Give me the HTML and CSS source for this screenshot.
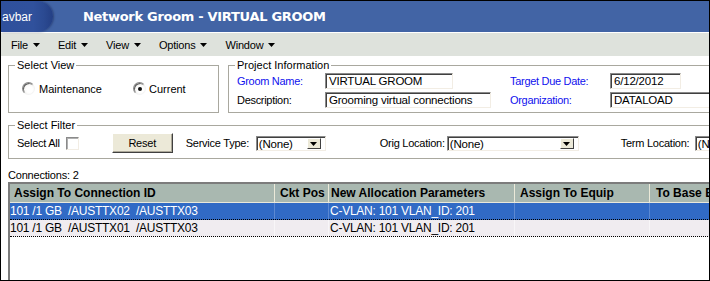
FILE: index.html
```html
<!DOCTYPE html>
<html>
<head>
<meta charset="utf-8">
<title>Network Groom</title>
<link rel="stylesheet" href="styles.css">
</head>
<body>
<div class="window">
  <div class="titlebar">
    <div class="navpill">avbar</div>
    <div class="title">Network Groom - VIRTUAL GROOM</div>
  </div>
  <div class="menubar">
    <div class="menu-item">File<svg class="caret" width="7" height="4" viewBox="0 0 7 4"><polygon points="0,0 7,0 3.5,4" fill="#000"/></svg></div>
    <div class="menu-item">Edit<svg class="caret" width="7" height="4" viewBox="0 0 7 4"><polygon points="0,0 7,0 3.5,4" fill="#000"/></svg></div>
    <div class="menu-item">View<svg class="caret" width="7" height="4" viewBox="0 0 7 4"><polygon points="0,0 7,0 3.5,4" fill="#000"/></svg></div>
    <div class="menu-item">Options<svg class="caret" width="7" height="4" viewBox="0 0 7 4"><polygon points="0,0 7,0 3.5,4" fill="#000"/></svg></div>
    <div class="menu-item">Window<svg class="caret" width="7" height="4" viewBox="0 0 7 4"><polygon points="0,0 7,0 3.5,4" fill="#000"/></svg></div>
  </div>
  <div class="content">
    <div class="top-row">
      <fieldset class="box view-box">
        <legend>Select View</legend>
        <div class="radio-row">
          <span class="radio"></span><span class="radio-label">Maintenance</span>
          <span class="radio checked second"></span><span class="radio-label narrow">Current</span>
        </div>
      </fieldset>
      <fieldset class="box project-box">
        <legend>Project Information</legend>
        <div class="project-grid">
          <span class="lbl blue">Groom Name:</span>
          <div class="input w-name">VIRTUAL GROOM</div>
          <span class="lbl blue">Target Due Date:</span>
          <div class="input w-date">6/12/2012</div>
          <span class="lbl">Description:</span>
          <div class="input w-desc">Grooming virtual connections</div>
          <span class="lbl blue">Organization:</span>
          <div class="input w-org">DATALOAD</div>
        </div>
      </fieldset>
    </div>
    <fieldset class="box filter-box">
      <legend>Select Filter</legend>
      <div class="filter-row">
        <span class="f-text">Select All</span>
        <span class="checkbox"></span>
        <div class="button">Reset</div>
        <span class="f-text lbl-service">Service Type:</span>
        <div class="select w-service"><span class="select-text">(None)</span><span class="select-btn"><svg width="7" height="4" viewBox="0 0 7 4"><polygon points="0,0 7,0 3.5,4" fill="#000"/></svg></span></div>
        <span class="f-text lbl-orig">Orig Location:</span>
        <div class="select w-orig"><span class="select-text">(None)</span><span class="select-btn"><svg width="7" height="4" viewBox="0 0 7 4"><polygon points="0,0 7,0 3.5,4" fill="#000"/></svg></span></div>
        <span class="f-text lbl-term">Term Location:</span>
        <div class="select w-term"><span class="select-text">(None)</span><span class="select-btn"><svg width="7" height="4" viewBox="0 0 7 4"><polygon points="0,0 7,0 3.5,4" fill="#000"/></svg></span></div>
      </div>
    </fieldset>
    <div class="count">Connections: 2</div>
    <div class="table">
      <div class="trow head">
        <div class="cell c1">Assign To Connection ID</div>
        <div class="cell c2">Ckt Pos</div>
        <div class="cell c3">New Allocation Parameters</div>
        <div class="cell c4">Assign To Equip</div>
        <div class="cell c5">To Base Equip</div>
      </div>
      <div class="trow data selected">
        <div class="cell c1">101 /1 GB&nbsp; /AUSTTX02&nbsp; /AUSTTX03</div>
        <div class="cell c2"></div>
        <div class="cell c3">C-VLAN: 101 VLAN_ID: 201</div>
        <div class="cell c4"></div>
        <div class="cell c5"></div>
      </div>
      <div class="trow data">
        <div class="cell c1">101 /1 GB&nbsp; /AUSTTX01&nbsp; /AUSTTX03</div>
        <div class="cell c2"></div>
        <div class="cell c3">C-VLAN: 101 VLAN_ID: 201</div>
        <div class="cell c4"></div>
        <div class="cell c5"></div>
      </div>
    </div>
  </div>
</div>
</body>
</html>
```
FILE: styles.css
```css
* { box-sizing: border-box; }
html, body { margin: 0; padding: 0; background: #fff; }
body {
  width: 710px;
  height: 281px;
  overflow: hidden;
  font-family: "Liberation Sans", Arial, sans-serif;
  font-size: 11px;
  color: #000;
}
.window {
  width: 710px;
  height: 281px;
  border: 1px solid #000;
  overflow: hidden;
  background: #fff;
}
.titlebar {
  height: 31px;
  background: #4264a5;
  display: flex;
  align-items: center;
}
.navpill {
  width: 52px;
  height: 31px;
  flex-shrink: 0;
  border-radius: 0 16px 16px 0;
  background: linear-gradient(to right, #2f509c 0%, #30519c 62%, #2b4a92 82%, #243f84 100%);
  box-shadow: 1px 0 2px rgba(20, 30, 70, 0.45);
  color: #fff;
  font-size: 12px;
  line-height: 31px;
  padding-left: 1px;
  padding-top: 1px;
}
.title {
  margin-left: 30px;
  color: #fff;
  font-family: "DejaVu Sans", Verdana, sans-serif;
  font-weight: bold;
  font-size: 13px;
  letter-spacing: -0.3px;
  padding-bottom: 1px;
}
.menubar {
  height: 24px;
  border-top: 1px solid #fff;
  background: #dee2dc;
  display: flex;
  align-items: center;
  padding-left: 10px;
  gap: 18px;
}
.menu-item {
  display: flex;
  align-items: center;
  gap: 5px;
  letter-spacing: -0.2px;
}
.caret { display: block; margin-top: 1px; }

.content {
  padding: 3px 0 0 7px;
  width: 740px;
}
.top-row {
  display: flex;
  height: 54px;
}
.box {
  margin: 0;
  padding: 0;
  border: 1px solid #a9a89f;
  min-width: 0;
}
.box legend {
  padding: 0 2px;
  margin-left: 6px;
  line-height: 13px;
  font-size: 11px;
}
.view-box {
  width: 211px;
  flex-shrink: 0;
}
.radio-row {
  display: flex;
  align-items: center;
  padding: 10px 0 0 13px;
  height: 13px;
  box-sizing: content-box;
}
.radio {
  width: 13px;
  height: 13px;
  border-radius: 50%;
  border: 1px solid;
  border-color: #8a8a8a #f4f4f4 #f4f4f4 #8a8a8a;
  box-shadow: inset 1px 1px 0 #606060;
  background: radial-gradient(circle at 60% 60%, #ffffff 30%, #ecebe6 100%);
  position: relative;
  flex-shrink: 0;
}
.radio.checked::after {
  content: "";
  position: absolute;
  width: 4px;
  height: 4px;
  border-radius: 50%;
  background: #111;
  left: 3.5px;
  top: 3.5px;
}
.radio.second { margin-left: 31px; }
.radio-label { margin-left: 4px; }
.radio-label.narrow { margin-left: 3px; }

.project-box {
  width: 520px;
  flex-shrink: 0;
  margin-left: 9px;
}
.project-grid {
  display: grid;
  grid-template-columns: 88px 185px 100px 1fr;
  grid-auto-rows: 16px;
  row-gap: 3px;
  align-items: center;
  padding: 1px 0 0 8px;
}
.lbl { letter-spacing: -0.3px; white-space: nowrap; }
.lbl.blue { color: #1010ee; }
.input {
  height: 16px;
  background: #fff;
  border: 1px solid;
  border-color: #8a8a8a #f2ede4 #f2ede4 #8a8a8a;
  box-shadow: inset 1px 1px 0 #404040;
  padding: 1px 0 0 3px;
  font-size: 11.5px;
  line-height: 13px;
  white-space: nowrap;
  overflow: hidden;
  letter-spacing: -0.2px;
}
.w-name { width: 128px; }
.w-desc { width: 166px; }
.w-date { width: 71px; }
.w-org { width: 140px; }

.filter-box {
  margin-top: 6px;
  width: 740px;
  height: 40px;
}
.filter-row {
  display: flex;
  align-items: center;
  height: 20px;
  margin-top: 1px;
  padding-left: 8px;
}
.f-text { white-space: nowrap; letter-spacing: -0.25px; flex-shrink: 0; }
.checkbox {
  width: 13px;
  height: 13px;
  margin-left: 6px;
  flex-shrink: 0;
  background: #fff;
  border: 1px solid;
  border-color: #8a8a8a #f2ede4 #f2ede4 #8a8a8a;
  box-shadow: inset 1px 1px 0 #b0b0b0;
}
.button {
  width: 61px;
  height: 20px;
  margin-left: 33px;
  flex-shrink: 0;
  background: #ece9d8;
  border: 1px solid;
  border-color: #fff #404040 #404040 #fff;
  box-shadow: inset -1px -1px 0 #aca899;
  display: flex;
  align-items: center;
  justify-content: center;
  letter-spacing: -0.2px;
}
.lbl-service { margin-left: 13px; width: 70px; }
.lbl-orig { margin-left: 54px; width: 67px; }
.lbl-term { margin-left: 42px; width: 74px; }
.select {
  height: 15px;
  flex-shrink: 0;
  background: #fff;
  border: 1px solid;
  border-color: #8a8a8a #f2ede4 #f2ede4 #8a8a8a;
  box-shadow: inset 1px 1px 0 #404040;
  display: flex;
  align-items: center;
  justify-content: space-between;
  padding: 1px 1px 0 2px;
}
.select-text { font-size: 11.5px; letter-spacing: -0.2px; line-height: 12px; }
.select-btn {
  width: 14px;
  height: 11px;
  background: #ece9d8;
  border: 1px solid;
  border-color: #fff #404040 #404040 #fff;
  display: flex;
  align-items: center;
  justify-content: center;
  margin-right: 3px;
}
.select-btn svg { display: block; }
.w-service { width: 70px; }
.w-orig { width: 132px; }
.w-term { width: 80px; }

.count {
  margin-top: 10px;
  line-height: 13px;
  height: 13px;
  letter-spacing: -0.2px;
}
.table {
  border-top: 2px solid #7c7c7c;
  border-left: 2px solid #7c7c7c;
  width: 760px;
  height: 120px;
  background: #fff;
}
.trow {
  display: grid;
  grid-template-columns: 265px 54px 186px 135px 200px;
}
.head {
  height: 19px;
  background: #a9b8b0;
  border-bottom: 1px solid #e9e8da;
  font-weight: bold;
  font-size: 12px;
}
.head .cell {
  border-right: 1px solid #ebe9d9;
  line-height: 18px;
  white-space: nowrap;
  overflow: hidden;
}
.head .c1 { padding-left: 4px; }
.head .c2 { padding-left: 5px; }
.head .c3 { padding-left: 2px; }
.head .c4 { padding-left: 5px; }
.head .c5 { padding-left: 6px; }
.data {
  height: 17px;
  background: #f0ecf0;
  border-bottom: 1px dotted #000;
  font-size: 12px;
  letter-spacing: -0.25px;
}
.data .cell {
  line-height: 16px;
  white-space: pre;
  overflow: hidden;
  border-right: 1px solid #f8f6f8;
}
.data .c3 { padding-left: 1px; }
.data.selected {
  background: #316ac5;
  color: #fff;
}
.data.selected .cell { border-right-color: #5b88d2; }
```
